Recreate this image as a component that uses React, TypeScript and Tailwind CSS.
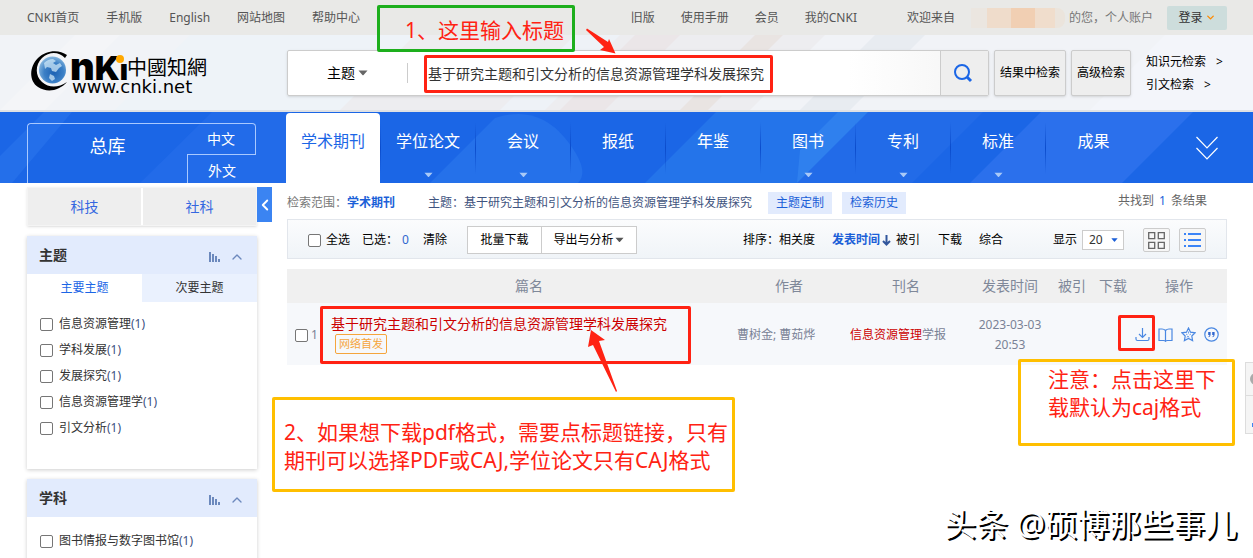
import { useState } from 'react'
import { ChevronDown, ChevronUp, ChevronLeft } from 'lucide-react'

const topLinks = ['CNKI首页', '手机版', 'English', '网站地图', '帮助中心']
const userLinks = ['旧版', '使用手册', '会员', '我的CNKI']

const tabs = [
  { label: '学术期刊', more: false },
  { label: '学位论文', more: true },
  { label: '会议', more: true },
  { label: '报纸', more: false },
  { label: '年鉴', more: false },
  { label: '图书', more: true },
  { label: '专利', more: true },
  { label: '标准', more: true },
  { label: '成果', more: false },
]

const topics = ['信息资源管理', '学科发展', '发展探究', '信息资源管理学', '引文分析']
const paperTitle = '基于研究主题和引文分析的信息资源管理学科发展探究'

function Caret({ className }: { className: string }) {
  return (
    <svg viewBox="0 0 10 6" className={className} fill="currentColor" aria-hidden="true">
      <path d="M0.5 0.5h9L5.6 5q-.6.7-1.2 0z" />
    </svg>
  )
}

function Logo() {
  return (
    <svg width="184" height="48" viewBox="0 0 184 48" className="overflow-visible" role="img" aria-label="中国知网">
      <defs>
        <radialGradient id="globe" cx="55%" cy="60%" r="60%">
          <stop offset="0" stopColor="#1d62b4" />
          <stop offset="0.6" stopColor="#3c80c6" />
          <stop offset="1" stopColor="#86b6de" />
        </radialGradient>
      </defs>
      <path d="M36 5C28-1 15 0 7 8c-9 9-9 23 0 29 9 6 21 4 29-5-9 6-18 6-25 0-7-6-7-17 0-24C18 2 27 1 34 8z" fill="#000" />
      <circle cx="21.500" cy="20" r="13.500" fill="url(#globe)" />
      <path d="M13 13q4-4 9-4l3 2-3 2 3 2 4-2 2 3-3 2-3 4-4-1-1-3-4-1-2 2zM19 24l4 2 1 3-3 2-3-3z" fill="#d6ecfa" opacity=".7" />
      <text x="39" y="30" fontFamily="Inter, Roboto, sans-serif" fontWeight="900" fontSize="38">
        n<tspan fontSize="33">K</tspan><tspan fontSize="28">ı</tspan>
      </text>
      <circle cx="89" cy="9" r="4" fill="#ffa800" />
      <text x="96" y="25" fontFamily="'Noto Sans CJK TC', sans-serif" fontSize="20">中國知網</text>
      <text x="41" y="43" fontFamily="'DejaVu Sans', sans-serif" fontSize="18">www.cnki.net</text>
    </svg>
  )
}

function BarsIcon() {
  return (
    <svg width="12" height="10" viewBox="0 0 12 10" fill="#6c89bd" aria-hidden="true">
      <path d="M0 0h2v10H0zM3 2h2v8H3zM6 4h2v6H6zM9 7h2v3H9z" />
    </svg>
  )
}

function PanelHead({ title }: { title: string }) {
  return (
    <div className="flex h-[38px] items-center bg-[#e2ebfd] pl-3 pr-3">
      <h2 className="flex-1 text-sm font-bold text-[#333]">{title}</h2>
      <button type="button" aria-label={`${title}统计`} className="mr-2 pt-1">
        <BarsIcon />
      </button>
      <button type="button" aria-label={`收起${title}`} className="pt-1">
        <ChevronUp size={16} color="#6c89bd" />
      </button>
    </div>
  )
}

const boxClass =
  'size-[13px] shrink-0 appearance-none rounded-xs border border-[#767676] bg-white checked:bg-[#1b66e6]'

function CheckItem({ label }: { label: string }) {
  return (
    <label className="flex h-[26px] items-center gap-1.5">
      <input type="checkbox" className={boxClass} />
      <span>
        {label}
        <span className="text-[#3d4f80]">(1)</span>
      </span>
    </label>
  )
}

function TopBar() {
  return (
    <div className="flex h-[35px] items-center bg-[#e9e9e7] pl-[27px] pr-[26px] text-[#555]">
      <nav className="flex flex-1 gap-[27px]">
        {topLinks.map((item) => (
          <a key={item} href="#">{item}</a>
        ))}
      </nav>
      <nav className="flex gap-[26px]">
        {userLinks.map((item) => (
          <a key={item} href="#">{item}</a>
        ))}
      </nav>
      <span className="ml-[50px]">欢迎来自</span>
      <span className="mx-1 flex h-6 w-[106px] items-center overflow-hidden pl-3" aria-hidden="true">
        <i className="h-5 w-4 bg-[#ebe6e0]" />
        <i className="h-5 w-6 bg-[#efdccb]" />
        <i className="h-5 w-6 bg-[#f1cfb3]" />
        <i className="h-5 w-5 bg-[#f0ddcc]" />
        <i className="h-5 w-2.5 rounded-r-lg bg-[#ebe4dc]" />
      </span>
      <span className="text-[#777]">的您，个人账户</span>
      <button type="button" className="ml-3.5 flex h-6 w-[60px] items-center justify-center gap-0.5 rounded-xs bg-[#cddddc] text-[#333]">
        登录
        <ChevronDown size={11} strokeWidth={3} color="#ff8a00" />
      </button>
    </div>
  )
}

const panelButton = 'h-[46px] rounded-xs border border-[#ccc] bg-[#eee] text-xs text-black shadow-sm'

function SearchHeader() {
  return (
    <header className="relative flex h-[77px] items-start border-b-2 border-[#dfe1e4] bg-[#f1f3f7] pr-[26px] pt-[15px]">
      <svg className="absolute inset-0 size-full" viewBox="0 0 1253 75" preserveAspectRatio="none" aria-hidden="true">
        <path d="M120 0H75L0 75h45z" fill="#f4f5f8" />
        <path d="M190 0h360l-75 75H115z" fill="#eef3f8" />
        <path d="M340 75 415 0h410l-75 75z" fill="#ededf0" />
        <path d="M500 75 575 0h45l-75 75z" fill="#eef2f7" />
        <path d="M560 75 635 0h45l-75 75z" fill="#ebe6e8" />
        <path d="M680 75 755 0h28l-75 75z" fill="#e9e4e2" />
        <path d="M800 75 875 0h50l-75 75z" fill="#e8ecf1" />
        <path d="M1090 75 1165 0h88v75z" fill="#f3f5fa" />
      </svg>
      <a href="#" className="relative w-[287px] shrink-0 pl-[31px]">
        <Logo />
      </a>
      <form className="relative flex min-w-0 flex-1 gap-[5px]" onSubmit={(e) => e.preventDefault()}>
        <div className="flex h-[46px] min-w-0 flex-1 items-center rounded-xs border border-[#ccc] bg-linear-to-r from-white from-80% to-[#f4f4f4] shadow-sm">
          <div className="relative flex w-[119px] items-center">
            <select aria-label="检索字段" className="w-full appearance-none pl-[39px] text-sm text-black">
              <option>主题</option>
            </select>
            <Caret className="pointer-events-none absolute left-[70px] h-1.5 w-2.5 text-[#666]" />
          </div>
          <span className="h-5 w-px bg-[#ccc]" />
          <input
            aria-label="检索词"
            defaultValue={paperTitle}
            className="h-full min-w-0 flex-1 bg-transparent pl-5 text-sm text-[#333] outline-none"
          />
          <button type="submit" aria-label="检索" className="flex h-full w-12 items-center justify-center border-l border-[#ccc] bg-[#eee] pr-1">
            <svg width="20" height="20" viewBox="0 0 20 20" fill="none" stroke="#1b66e6" strokeWidth="2" aria-hidden="true">
              <circle cx="9" cy="9" r="7" />
              <path d="m14 14 4 4" strokeWidth="3" />
            </svg>
          </button>
        </div>
        <button type="button" className={`${panelButton} w-[72px]`}>结果中检索</button>
        <button type="button" className={`${panelButton} w-[60px]`}>高级检索</button>
      </form>
      <div className="relative ml-[15px] flex w-[81px] shrink-0 flex-col text-black">
        <a href="#" className="flex h-[23px] items-center gap-2.5">知识元检索 <span>&gt;</span></a>
        <a href="#" className="flex h-[23px] items-center gap-2.5">引文检索 <span>&gt;</span></a>
      </div>
    </header>
  )
}

function DatabaseNav() {
  const [active, setActive] = useState('学术期刊')
  return (
    <div className="relative flex h-[71px] bg-[#1b66e6] text-white">
      <svg className="absolute inset-0 size-full" viewBox="0 0 1253 71" preserveAspectRatio="none" aria-hidden="true">
        <path d="M0 44 44 0h28L12 71H0z" fill="#246fea" />
        <path d="M140 71 212 0h80v71z" fill="#226be9" />
        <path d="M430 71 495 6q42-14 70 20 26 32 13 45z" fill="#2571ea" />
        <path d="M645 71 716 0h152l-71 71z" fill="#2474ea" />
        <path d="M797 71 868 0h115l-71 71z" fill="#226be8" />
        <path d="M800 38 838 0h30l-71 71z" fill="#2f80ee" />
        <path d="M970 71 1041 0h152l-71 71z" fill="#2b70ec" />
      </svg>
      <div className="relative w-[286px] shrink-0 pl-[27px] pr-[30px] pt-[11px]">
        <div className="flex h-[60px]">
          <a href="#" className="flex flex-1 justify-center rounded-tl-sm border-l border-t border-[#a9c9ff] pt-2 text-lg">总库</a>
          <div className="flex w-[69px] flex-col text-sm">
            <a href="#" className="flex h-8 items-center justify-center rounded-tr-sm border-b border-r border-t border-[#a9c9ff]">中文</a>
            <a href="#" className="flex flex-1 items-center justify-center border-l border-[#a9c9ff] pt-1">外文</a>
          </div>
        </div>
      </div>
      <div className="relative flex flex-1 pt-px">
        {tabs.map((tab, i) => (
          <div key={tab.label} className="flex w-[95px] items-center">
            <button
              type="button"
              onClick={() => setActive(tab.label)}
              className={`flex h-full flex-1 flex-col items-center pt-4 text-base ${
                active === tab.label ? 'rounded-t bg-white text-[#1b66e6]' : ''
              }`}
            >
              {tab.label}
              {tab.more && <Caret className="mt-[19px] h-1.5 w-[9px] text-[#a9c9f7]" />}
            </button>
            {i < tabs.length - 1 && <span className="h-13 w-px bg-linear-to-b from-transparent via-[#0b4ccc] to-transparent" />}
          </div>
        ))}
        <button type="button" aria-label="展开更多" className="ml-auto mr-[34px]">
          <svg width="24" height="26" viewBox="0 0 24 26" fill="none" stroke="#fff" strokeWidth="1.200">
            <path d="m1.500 2 10.500 11L22.500 2M1.500 13 12 24 22.500 13" />
          </svg>
        </button>
      </div>
    </div>
  )
}

function Sidebar() {
  return (
    <aside className="flex w-[287px] shrink-0 items-start pl-[27px] pt-1">
      <div className="flex w-[230px] flex-col gap-2.5 text-[#333]">
        <div className="flex h-[39px] gap-0.5 border border-[#f4f4f4] bg-white text-sm text-[#3567e0] shadow-sm">
          <button type="button" className="flex-1 bg-[#eee]">科技</button>
          <button type="button" className="flex-1 bg-[#eee]">社科</button>
        </div>
        <section className="h-[233px] bg-white shadow-[0_1px_4px_#00000033]">
          <PanelHead title="主题" />
          <div className="flex h-7">
            <button type="button" className="flex-1 text-[#1b66e6]">主要主题</button>
            <button type="button" className="flex-1 bg-[#eaf1fe]">次要主题</button>
          </div>
          <div className="px-[13px] pt-[9px]">
            {topics.map((t) => (
              <CheckItem key={t} label={t} />
            ))}
          </div>
        </section>
        <section className="h-[233px] bg-white shadow-[0_1px_4px_#00000033]">
          <PanelHead title="学科" />
          <div className="px-[13px] pt-[11px]">
            <CheckItem label="图书情报与数字图书馆" />
          </div>
        </section>
      </div>
      <button type="button" aria-label="收起侧栏" className="flex h-[35px] w-[15px] items-center justify-center bg-[#3b84f2]">
        <ChevronLeft size={18} strokeWidth={2.5} color="#fff" className="shrink-0" />
      </button>
    </aside>
  )
}

function Toolbar() {
  return (
    <div className="flex h-10 items-center border border-[#e2e6ec] bg-linear-to-b from-[#fbfcfd] to-[#f0f4f8] pl-5 pr-5 pt-0.5 text-black">
      <label className="flex items-center gap-[5px]">
        <input type="checkbox" className={boxClass} />
        全选
      </label>
      <span className="ml-3">已选：</span>
      <span className="ml-1 text-[#2f66cf]">0</span>
      <button type="button" className="ml-3.5">清除</button>
      <button type="button" className="ml-5 h-7 w-[75px] border border-[#ccc] bg-white">批量下载</button>
      <button type="button" className="-ml-px flex h-7 w-24 items-center justify-center gap-0.5 border border-[#ccc] bg-white">
        导出与分析
        <Caret className="h-1.5 w-[9px] text-[#555]" />
      </button>
      <span className="ml-auto">排序：</span>
      <a href="#">相关度</a>
      <a href="#" className="ml-[17px] flex items-center font-bold text-[#1b5fd8]">
        发表时间
        <svg width="12" height="12" viewBox="0 0 12 12" fill="none" stroke="#31569c" strokeWidth="2" aria-hidden="true">
          <path d="M6.500 1v9M3 7l3.500 3.500L10 7" />
        </svg>
      </a>
      <a href="#" className="ml-1">被引</a>
      <a href="#" className="ml-[18px]">下载</a>
      <a href="#" className="ml-[17px]">综合</a>
      <label className="ml-[50px] flex items-center gap-[5px]">
        显示
        <span className="relative flex items-center">
          <select className="h-5 w-[42px] appearance-none border border-[#ccc] bg-white pl-1.5 text-xs text-[#333]">
            <option>20</option>
          </select>
          <Caret className="pointer-events-none absolute right-1.5 h-1.5 w-[7px] text-[#1b5fd8]" />
        </span>
      </label>
      <button type="button" aria-label="网格视图" className="ml-[19px] flex h-6 w-[27px] items-center justify-center rounded-xs border border-[#ccc] bg-[#f6f6f6]">
        <svg width="17" height="17" viewBox="0 0 17 17" fill="none" stroke="#666" strokeWidth="1.300">
          <path d="M.7 .7h6v6h-6zM10.300 .7h6v6h-6zM.7 10.300h6v6h-6zM10.300 10.300h6v6h-6z" />
        </svg>
      </button>
      <button type="button" aria-label="列表视图" className="ml-[9px] flex h-6 w-[27px] items-center justify-center rounded-xs border border-[#ccc] bg-[#f6f6f6]">
        <svg width="17" height="16" viewBox="0 0 17 16" fill="#3b84f7">
          <path d="M0 1h2v2H0zM4 1h13v2H4zM0 7h2v2H0zM4 7h13v2H4zM0 13h2v2H0zM4 13h13v2H4z" />
        </svg>
      </button>
    </div>
  )
}

function RowActions() {
  const frame = { width: 15, height: 15, viewBox: '0 0 15 15', fill: 'none', stroke: '#4a88e2', strokeWidth: 1.2 }
  return (
    <div className="flex gap-2 pl-1">
      <a href="#" aria-label="下载">
        <svg {...frame}>
          <path d="M7.500 1v9.500M4 7l3.500 3.500L11 7M1 10v2q0 1.500 1.500 1.500h10Q14 13.500 14 12v-2" />
        </svg>
      </a>
      <a href="#" aria-label="阅读">
        <svg {...frame}>
          <path d="M7.500 3.500Q6 2 4 2H1v11.500h4.500q1.500 0 2 .8.5-.8 2-.8H14V2h-3q-2 0-3.500 1.500zm0 0v10.500" />
        </svg>
      </a>
      <a href="#" aria-label="收藏">
        <svg {...frame}>
          <path d="m7.500 1 2 4.200 4.700.6-3.400 3.200.8 4.600-4.100-2.200-4.100 2.200.8-4.600L.8 5.800l4.700-.6z" />
          <path d="M7.500 4.500v2M5 7l1.500.8M10 7l-1.500.8M6 10.500l1-1.500 1 1.500" strokeWidth=".8" />
        </svg>
      </a>
      <a href="#" aria-label="引用">
        <svg {...frame}>
          <circle cx="7.500" cy="7.500" r="6.700" />
          <path d="M4.200 5h2.400v2.500q0 2-1.800 2.700l-.4-.7q1-.5 1.100-1.500H4.200zM8.200 5h2.400v2.500q0 2-1.800 2.700l-.4-.7q1-.5 1.100-1.500H8.200z" fill="#2f66cf" stroke="none" />
        </svg>
      </a>
    </div>
  )
}

function ResultTable() {
  return (
    <table className="mt-2.5 w-full table-fixed border-collapse text-[#7a8296]">
      <colgroup>
        <col className="w-[34px]" />
        <col />
        <col className="w-[104px]" />
        <col className="w-[130px]" />
        <col className="w-[78px]" />
        <col className="w-[46px]" />
        <col className="w-[36px]" />
        <col className="w-[96px]" />
      </colgroup>
      <thead>
        <tr className="h-[34px] bg-[#f0f0f0] text-sm text-[#7f8899]">
          <th aria-label="选择" />
          {['篇名', '作者', '刊名', '发表时间', '被引', '下载', '操作'].map((h) => (
            <th key={h} className="font-normal">{h}</th>
          ))}
        </tr>
      </thead>
      <tbody>
        <tr className="h-[62px] bg-[#f6f8fb]">
          <td className="pl-2 pt-0.5">
            <label className="flex items-center gap-[3px]">
              <input type="checkbox" className={boxClass} />1
            </label>
          </td>
          <td className="pl-2.5">
            <a href="#" className="block text-sm text-[#c00]">{paperTitle}</a>
            <span className="ml-1 flex h-5 w-[52px] items-center justify-center rounded-xs border border-[#f5a53c] text-[11px] text-[#f5a53c]">
              网络首发
            </span>
          </td>
          <td className="pt-0.5">曹树金; 曹茹烨</td>
          <td className="pl-[9px] pt-0.5">
            <a href="#"><span className="text-[#c00]">信息资源管理</span>学报</a>
          </td>
          <td className="pt-0.5 text-center leading-5">2023-03-03 20:53</td>
          <td />
          <td />
          <td><RowActions /></td>
        </tr>
      </tbody>
    </table>
  )
}

function Results() {
  return (
    <main className="min-w-0 flex-1 pr-[26px]">
      <div className="flex h-9 items-center pt-[3px]">
        <span className="text-[#777]">检索范围：</span>
        <b className="text-[#1b5fd8]">学术期刊</b>
        <span className="ml-[33px] text-[#3f5480]">主题：{paperTitle}</span>
        <button type="button" className="ml-4 h-[22px] w-16 bg-[#e2ebfd] text-[#1b5fd8]">主题定制</button>
        <button type="button" className="ml-2.5 h-[22px] w-16 bg-[#e2ebfd] text-[#1b5fd8]">检索历史</button>
        <span className="ml-auto mr-5 pb-1 text-[#666]">
          共找到 <span className="mx-0.5 text-[#1b5fd8]">1</span> 条结果
        </span>
      </div>
      <Toolbar />
      <ResultTable />
    </main>
  )
}

// Red boxes, notes and arrows that sit on top of the page
function Annotations() {
  return (
    <div className="pointer-events-none absolute inset-0 text-[21px] leading-7 text-[#ff2213]">
      <p className="absolute left-[377px] top-[5px] h-[47px] w-[198px] rounded-xs border-3 border-[#1daf1d] pl-[25px] pt-2">
        1、这里输入标题
      </p>
      <div className="absolute left-[424px] top-[55px] h-[38px] w-[349px] rounded-xs border-3 border-[#ff2213]" />
      <div className="absolute left-[320px] top-[306px] h-[58px] w-[371px] rounded-xs border-3 border-[#ff2213]" />
      <div className="absolute right-[98px] top-[315px] h-9 w-[37px] rounded-xs border-3 border-[#ff2213]" />
      <p className="absolute left-[272px] top-[397px] h-[95px] w-[463px] whitespace-nowrap rounded-xs border-3 border-[#ffbf00] pl-[9px] pt-[18px]">
        2、如果想下载pdf格式，需要点标题链接，只有
        <br />
        期刊可以选择PDF或CAJ,学位论文只有CAJ格式
      </p>
      <p className="absolute right-[18px] top-[359px] h-[87px] w-[217px] whitespace-nowrap rounded-xs border-3 border-[#ffbf00] pl-[27px] pt-[3px]">
        注意：点击这里下
        <br />
        载默认为caj格式
      </p>
      <svg className="absolute left-[580px] top-5 h-9 w-9" viewBox="0 0 36 36" fill="#ff2213">
        <path d="M7 8.500 28 22l1-3 6.500 14.500L20 30l4-3L6 10z" />
      </svg>
      <svg className="absolute left-[585px] top-[328px] h-[66px] w-9" viewBox="0 0 36 66" fill="#ff2213">
        <path d="M6 2 20 12l-6 1 18 50-1 1L8 17l-5 2z" />
      </svg>
    </div>
  )
}

export default function App() {
  return (
    <div className="relative h-screen min-w-[1180px] overflow-hidden bg-white font-['Noto_Sans','Noto_Sans_CJK_SC',sans-serif] text-xs">
      <TopBar />
      <SearchHeader />
      <DatabaseNav />
      <div className="flex items-start">
        <Sidebar />
        <Results />
      </div>
      <div className="absolute right-0 top-[362px] flex h-[72px] w-2 flex-col overflow-hidden border-y border-l border-[#ddd] bg-[#f5f5f5]">
        <div className="flex flex-1 items-center border-b border-[#ddd] pl-1">
          <span className="size-3 shrink-0 rounded-full bg-[#aaa]" />
        </div>
        <div className="flex flex-1 items-end pb-1.5 pl-1.5">
          <span className="size-1 shrink-0 bg-[#3b84f2]" />
        </div>
      </div>
      <Annotations />
      <p className="absolute right-4 top-[502px] whitespace-nowrap text-[32px] leading-[44px] text-white [text-shadow:2px_2px_0_#000]">
        头条 @硕博那些事儿
      </p>
    </div>
  )
}
